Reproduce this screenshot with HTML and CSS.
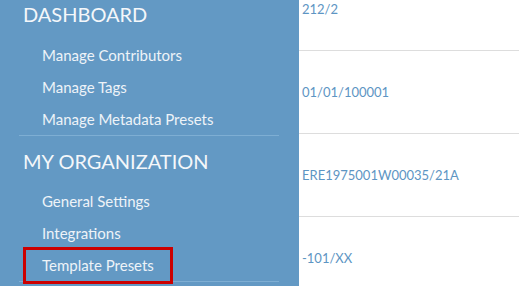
FILE: index.html
```html
<!DOCTYPE html>
<html lang="en">
<head>
  <meta charset="UTF-8" />
  <title>Settings</title>
  <link rel="stylesheet" href="styles.css">
</head>
<body>
  <div class="layout">
    <!-- Sidebar -->
    <nav class="sidebar">
      <div class="group">
        <h2>DASHBOARD</h2>
        <a href="#">Manage Contributors</a>
        <a href="#">Manage Tags</a>
        <a href="#">Manage Metadata Presets</a>
      </div>
      <div class="group">
        <h2>MY ORGANIZATION</h2>
        <a href="#">General Settings</a>
        <a href="#">Integrations</a>
        <a href="#" class="marked">Template Presets</a>
      </div>
    </nav>

    <!-- Lista -->
    <main class="list">
      <div class="row">212/2</div>
      <div class="row">01/01/100001</div>
      <div class="row">ERE1975001W00035/21A</div>
      <div class="row">-101/XX</div>
    </main>
  </div>
</body>
</html>
```

FILE: styles.css
```css
html, body { margin: 0; height: 100%; overflow: hidden; background: #fff; }
body { font-family: Lato, "Liberation Sans", sans-serif; }
.layout { display: flex; height: 100%; }

.sidebar { width: 299px; flex: none; background: #6399c4; padding: 0 20px 0 19px; box-sizing: border-box; }
.group { border-bottom: 1px solid #7eaed3; display: flex; flex-direction: column; align-items: flex-start; }
.group + .group { padding-top: 11px; }
.sidebar h2 { margin: 0 0 11px; padding-left: 4px; font-size: 20px; line-height: 28px; font-weight: normal; color: #f4f7fa; }
.group + .group h2 { margin-bottom: 10px; }
.sidebar a { display: block; padding-left: 23px; font-size: 15px; line-height: 32px; color: #eef3f8; text-decoration: none; }
.sidebar a.marked { outline: 3px solid #cc0000; box-sizing: border-box; width: 144px; height: 31px; margin: 1px 0 0 7px; padding-left: 16px; line-height: 30px; }

.list { flex: 1; margin-top: -32px; }
.row { height: 82px; border-bottom: 1px solid #dddddd; display: flex; align-items: center; padding-left: 3px; font-size: 13px; color: #5d95c3; }
```
